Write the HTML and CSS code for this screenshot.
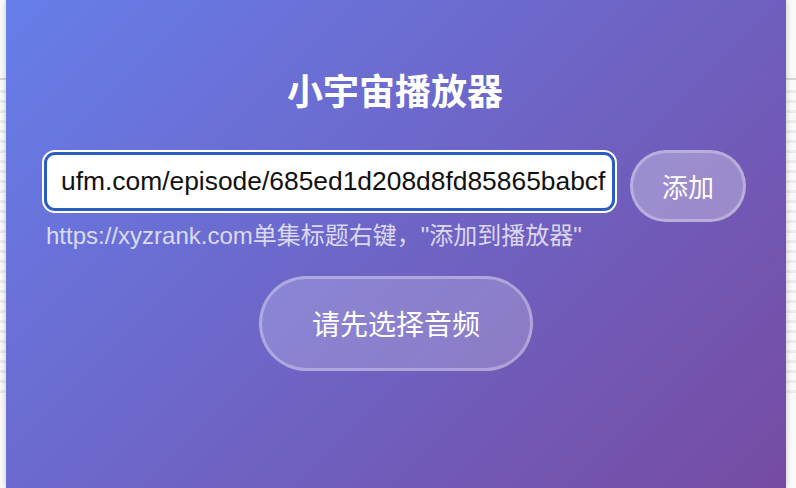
FILE: index.html
```html
<!DOCTYPE html>
<html lang="zh-CN">
<head>
<meta charset="utf-8">
<title>小宇宙播放器</title>
<link rel="stylesheet" href="styles.css">
</head>
<body>
  <main class="panel">
    <h1 class="title">小宇宙播放器</h1>
    <div class="add-row">
      <input class="url-input" type="text" value="ufm.com/episode/685ed1d208d8fd85865babcf">
      <button class="add-btn" type="button">添加</button>
    </div>
    <p class="hint">https://xyzrank.com单集标题右键，"添加到播放器"</p>
    <div class="play-wrap">
      <button class="play-btn" type="button">请先选择音频</button>
    </div>
  </main>
</body>
</html>
```

FILE: styles.css
```css
html, body {
  margin: 0;
  padding: 0;
  height: 100%;
}

body {
  background-color: #fafafa;
  background-image:
    linear-gradient(to bottom, #d6d6d6 0, #d6d6d6 2px, transparent 2px),
    repeating-linear-gradient(to bottom, #ececec 0, #ececec 3px, #fafafa 3px, #fafafa 10px);
  background-size: 100% 2px, 100% 305px;
  background-position: 0 78px, 0 90px;
  background-repeat: no-repeat;
  overflow: hidden;
  font-family: "Liberation Sans", "Noto Sans CJK SC", sans-serif;
}

.panel {
  box-sizing: border-box;
  margin: 0 10px 0 6px;
  height: 100%;
  padding: 67px 40px 0 38px;
  background: linear-gradient(135deg, #667eea 0%, #764ba2 100%);
  box-shadow: 0 0 6px rgba(0, 0, 0, 0.22);
  color: #fff;
}

.title {
  margin: 0;
  text-align: center;
  font-family: "Noto Sans CJK SC", sans-serif;
  font-size: 36px;
  line-height: 44px;
  font-weight: 700;
  color: #fff;
}

.add-row {
  display: flex;
  align-items: flex-start;
  gap: 15px;
  margin-top: 39px;
}

.url-input {
  box-sizing: border-box;
  flex: 1;
  min-width: 0;
  height: 59px;
  margin-top: 2px;
  padding: 0 4px 0 14px;
  border: 3px solid #2a5cc4;
  border-radius: 11px;
  box-shadow: 0 0 0 2px #ffffff;
  background: #fff;
  outline: none;
  font-family: "Liberation Sans", sans-serif;
  font-size: 26.4px;
  color: #111;
}

.add-btn {
  box-sizing: border-box;
  width: 116px;
  height: 72px;
  padding: 0;
  border: 3px solid rgba(255, 255, 255, 0.3);
  border-radius: 36px;
  background: rgba(255, 255, 255, 0.3);
  color: #fff;
  font-family: "Noto Sans CJK SC", sans-serif;
  font-size: 26px;
  line-height: 30px;
}

.hint {
  margin: 0;
  padding-left: 2px;
  font-size: 24px;
  line-height: 28px;
  color: rgba(255, 255, 255, 0.75);
}

.play-wrap {
  display: flex;
  justify-content: center;
  margin-top: 26px;
  padding-left: 2px;
}

.play-btn {
  box-sizing: border-box;
  height: 95px;
  padding: 0 50px;
  border: 3px solid rgba(255, 255, 255, 0.3);
  border-radius: 48px;
  background: rgba(255, 255, 255, 0.2);
  color: #fff;
  font-family: "Noto Sans CJK SC", sans-serif;
  font-size: 28px;
  line-height: 35px;
}
```
